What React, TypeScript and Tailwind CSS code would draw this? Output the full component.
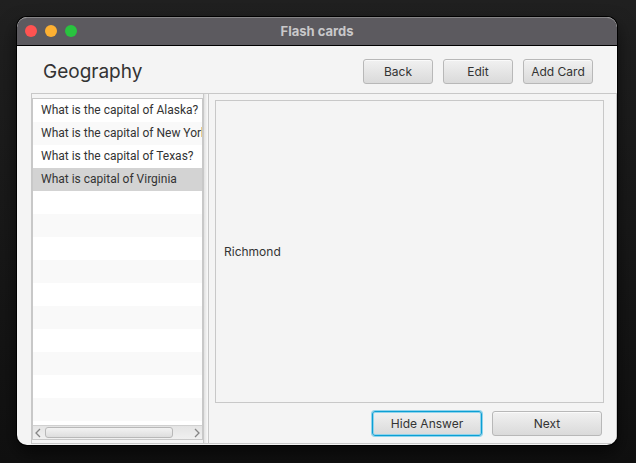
import { useState } from "react";

const cards = [
  { question: "What is the capital of Alaska?", answer: "Juneau" },
  { question: "What is the capital of New York?", answer: "Albany" },
  { question: "What is the capital of Texas?", answer: "Austin" },
  { question: "What is capital of Virginia", answer: "Richmond" },
];

const buttonBase =
  "h-[25px] rounded-[3px] border bg-linear-to-b from-[#f1f1f1] to-[#dadada] text-center text-[12px] leading-4 text-[#333333]";
const plain = "border-[#b8b8b8] shadow-[inset_0_1px_0_#fafafa]";
const focused = "border-[#0c9fd3] shadow-[0_0_0_1px_#8fd3ec,inset_0_0_0_1px_#8fd3ec]";

function Chevron({ path }: { path: string }) {
  return (
    <svg width="6" height="10" viewBox="0 0 6 10" fill="none" stroke="#858585" strokeWidth="1.3" aria-hidden="true">
      <path d={path} />
    </svg>
  );
}

export default function App() {
  const [selected, setSelected] = useState(3);
  const [shown, setShown] = useState(true);

  return (
    <div className="h-screen bg-linear-to-b from-[#202020] to-[#101010] pt-[17px] pr-[19px] pb-[18px] pl-[17px] font-['Inter','Liberation_Sans',sans-serif] text-[#333333]">
      <div className="flex h-full flex-col overflow-hidden rounded-[10px] bg-[#f4f4f4] shadow-[0_0_0_1px_#000,0_8px_18px_#0009]">
        <header className="grid h-[29px] shrink-0 grid-cols-[1fr_auto_1fr] items-center rounded-t-[10px] border-t border-b border-t-[#858486] border-b-black bg-[#5c5a5f]">
          <div className="flex gap-2 pb-px pl-2">
            <button aria-label="Close" className="size-3 rounded-full bg-[#ff5351]" />
            <button aria-label="Minimize" className="size-3 rounded-full bg-[#fdb032]" />
            <button aria-label="Zoom" className="size-3 rounded-full bg-[#29c33f]" />
          </div>
          <span className="pb-[2px] text-[13px] leading-4 font-bold text-[#c9c8ca]">Flash cards</span>
        </header>

        <div className="flex h-[47px] shrink-0 items-center pt-1 pr-6 pl-[26px]">
          <h1 className="flex-1 text-[19px] leading-6">Geography</h1>
          <div className="flex gap-[10px]">
            <button className={`w-[70px] ${buttonBase} ${plain}`}>Back</button>
            <button className={`w-[70px] ${buttonBase} ${plain}`}>Edit</button>
            <button className={`w-[70px] ${buttonBase} ${plain}`}>Add Card</button>
          </div>
        </div>

        <main className="mb-px ml-[14px] flex min-h-0 flex-1 border border-[#c8c8c8]">
          <div className="flex w-[171px] shrink-0 flex-col pt-1 pb-[3px]">
            <div className="flex min-h-0 flex-1 flex-col border border-[#c8c8c8] bg-white">
              <ul className="min-h-0 flex-1 overflow-hidden bg-[repeating-linear-gradient(to_bottom,#ffffff_0px,#ffffff_23px,#f9f9f9_23px,#f9f9f9_46px)]">
                {cards.map((card, i) => (
                  <li key={card.question}>
                    <button
                      onClick={() => setSelected(i)}
                      className={`block h-[23px] w-full overflow-hidden pl-2 text-left font-['Roboto','Liberation_Sans',sans-serif] text-[12px] leading-[23px] whitespace-nowrap ${
                        i === selected ? "bg-[#d3d3d3]" : ""
                      }`}
                    >
                      {card.question}
                    </button>
                  </li>
                ))}
              </ul>
              <div className="flex h-[14px] shrink-0 items-center border-t border-[#d0d0d0] bg-linear-to-b from-[#e4e4e4] to-[#f0f0f0] px-[2px]">
                <button aria-label="Scroll left">
                  <Chevron path="M5 1 1 5l4 4" />
                </button>
                <div className="mx-1 flex-1">
                  <div className="h-[11px] w-[128px] rounded-[3px] border border-[#b8b8b8] bg-linear-to-b from-[#f3f3f3] to-[#dddddd]" />
                </div>
                <button aria-label="Scroll right">
                  <Chevron path="m1 1 4 4-4 4" />
                </button>
              </div>
            </div>
          </div>
          <div className="w-[6px] shrink-0 border-x border-[#c8c8c8] bg-linear-to-r from-[#e2e2e2] to-[#fafafa]" />
          <section className="flex min-w-0 flex-1 flex-col pt-[6px] pr-3 pb-[7px] pl-[6px]">
            <div className="flex min-h-0 flex-1 items-center border border-[#c8c8c8] pl-2 text-[12px] leading-4">
              {shown ? cards[selected].answer : ""}
            </div>
            <div className="flex justify-end gap-[10px] pt-2 pr-[2px]">
              <button onClick={() => setShown(!shown)} className={`w-[110px] ${buttonBase} ${focused}`}>
                {shown ? "Hide Answer" : "Show Answer"}
              </button>
              <button onClick={() => setSelected((selected + 1) % cards.length)} className={`w-[110px] ${buttonBase} ${plain}`}>
                Next
              </button>
            </div>
          </section>
        </main>
      </div>
    </div>
  );
}
